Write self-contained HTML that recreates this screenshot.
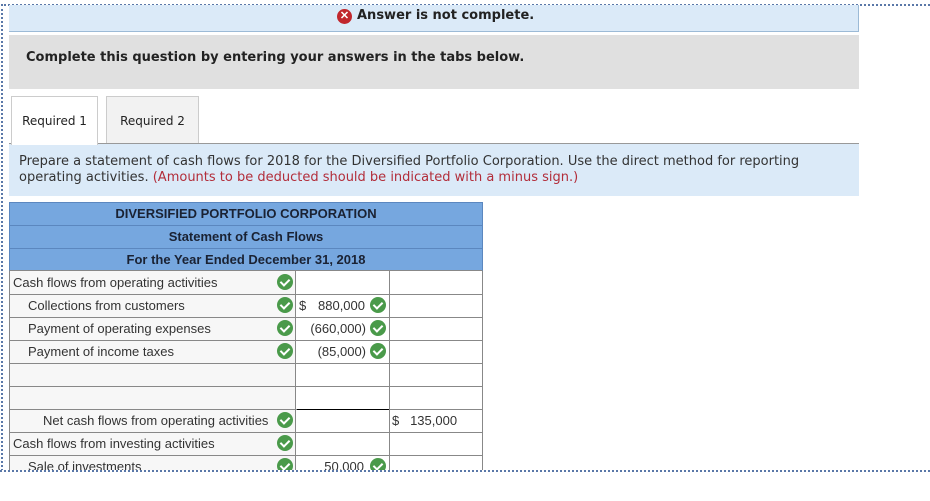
<!DOCTYPE html>
<html><head><meta charset="utf-8"><style>
*{margin:0;padding:0;box-sizing:border-box}
body{width:930px;height:483px;background:#fff;position:relative;overflow:hidden;font-family:"DejaVu Sans",Verdana,sans-serif}
.a{position:absolute}
.dotT{left:1px;top:4px;width:929px;border-top:2px dotted #5a78a8}
.dotB{left:0;top:470px;width:930px;height:13px;background:#fff;border-top:2px dotted #5a78a8;z-index:5}
.dotL{left:1px;top:4px;height:467px;border-left:2px dotted #5a78a8}
.ban{left:9px;top:5px;width:850px;height:27px;background:#dbeaf8;border-bottom:1px solid #9cbad6;border-right:1px solid #9cbad6}
.ban span{position:absolute;left:348px;top:3px;font-size:13px;font-weight:bold;color:#222}
.x{position:absolute;left:328px;top:4px;width:15px;height:15px;border-radius:50%;background:#c1272d;color:#fff;font-size:11px;line-height:15px;text-align:center;font-weight:bold;font-family:"Liberation Sans",sans-serif}
.gray{left:9px;top:35px;width:850px;height:54px;background:#e0e0e0}
.gray span{position:absolute;left:17px;top:15px;font-size:13px;font-weight:bold;color:#222}
.tab{top:96px;height:48px;border:1px solid #ccc;font-size:12px;color:#222;text-align:center;line-height:48px}
.ins{left:9px;top:143px;width:850px;height:53px;background:#dbeaf8;border-top:1px solid #999;font-size:13px;color:#333;padding:10px 40px 0 10px;line-height:16px}
.ins em{font-style:normal;color:#b22d3a}
.tbl{left:9px;top:202px;width:474px;font-family:"Liberation Sans",Arial,sans-serif;color:#222}
.h{height:23px;background:#76a7df;border:1px solid #5b87bf;border-bottom:none;text-align:center;line-height:22px;font-weight:bold;font-size:13px;color:#1a2233}
.r{position:absolute;height:23px;border-top:1px solid #888}
.c{position:absolute;width:16px;height:16px;border-radius:50%;background:#4a9a4a}
.c::after{content:"";position:absolute;left:5px;top:3px;width:4px;height:7px;border:solid #fff;border-width:0 2px 2px 0;transform:rotate(45deg)}
</style></head><body>
<div class="a dotT"></div><div class="a dotL"></div>
<div class="a ban"><div class="x">✕</div><span>Answer is not complete.</span></div>
<div class="a gray"><span>Complete this question by entering your answers in the tabs below.</span></div>
<div class="a tab" style="left:11px;width:87px;background:#fff;border-bottom:none;z-index:2;height:49px">Required 1</div>
<div class="a tab" style="left:106px;width:93px;background:#f2f2f2">Required 2</div>
<div class="a ins">Prepare a statement of cash flows for 2018 for the Diversified Portfolio Corporation. Use the direct method for reporting operating activities. <em>(Amounts to be deducted should be indicated with a minus sign.)</em></div>
<div class="a tbl">
<div class="h">DIVERSIFIED PORTFOLIO CORPORATION</div>
<div class="h">Statement of Cash Flows</div>
<div class="h" style="border-bottom:1px solid #888">For the Year Ended December 31, 2018</div>
</div>
<div class="a" style="left:9px;top:271px;width:474px;height:210px;border-left:1px solid #888;border-right:1px solid #888;font-family:'Liberation Sans',Arial,sans-serif;font-size:13px;color:#333">
<div class="a" style="left:0;top:0;width:286px;height:210px;background:#f7f7f7;border-right:1px solid #888"></div>
<div class="a" style="left:379px;top:0;height:210px;border-left:1px solid #888"></div>
<div class="r" style="top:23px;width:473px"></div><div class="r" style="top:46px;width:473px"></div><div class="r" style="top:69px;width:473px"></div><div class="r" style="top:92px;width:473px"></div><div class="r" style="top:115px;width:473px"></div><div class="r" style="top:138px;width:473px"></div><div class="r" style="top:138px;left:287px;width:92px;border-top:1px solid #000"></div><div class="r" style="top:161px;width:473px"></div><div class="r" style="top:184px;width:473px"></div><div class="r" style="top:207px;width:473px"></div>
<div class="a" style="left:3px;top:4px">Cash flows from operating activities</div>
<div class="a" style="left:18px;top:27px">Collections from customers</div>
<div class="a" style="left:18px;top:50px">Payment of operating expenses</div>
<div class="a" style="left:18px;top:73px">Payment of income taxes</div>
<div class="a" style="left:33px;top:142px">Net cash flows from operating activities</div>
<div class="a" style="left:3px;top:165px">Cash flows from investing activities</div>
<div class="a" style="left:18px;top:188px">Sale of investments</div>
<div class="a" style="left:289px;top:27px">$</div>
<div class="a" style="left:300px;top:27px;width:55px;text-align:right">880,000</div>
<div class="a" style="left:288px;top:50px;width:68px;text-align:right">(660,000)</div>
<div class="a" style="left:288px;top:73px;width:68px;text-align:right">(85,000)</div>
<div class="a" style="left:288px;top:188px;width:66px;text-align:right">50,000</div>
<div class="a" style="left:382px;top:142px">$&nbsp;&nbsp; 135,000</div>
<div class="c" style="left:267px;top:3px"></div><div class="c" style="left:267px;top:26px"></div><div class="c" style="left:267px;top:49px"></div><div class="c" style="left:267px;top:72px"></div><div class="c" style="left:267px;top:141px"></div><div class="c" style="left:267px;top:164px"></div><div class="c" style="left:267px;top:187px"></div>
<div class="c" style="left:360px;top:26px"></div><div class="c" style="left:360px;top:49px"></div><div class="c" style="left:360px;top:72px"></div><div class="c" style="left:360px;top:187px"></div>
</div>
<div class="a dotB"></div>
</body></html>
